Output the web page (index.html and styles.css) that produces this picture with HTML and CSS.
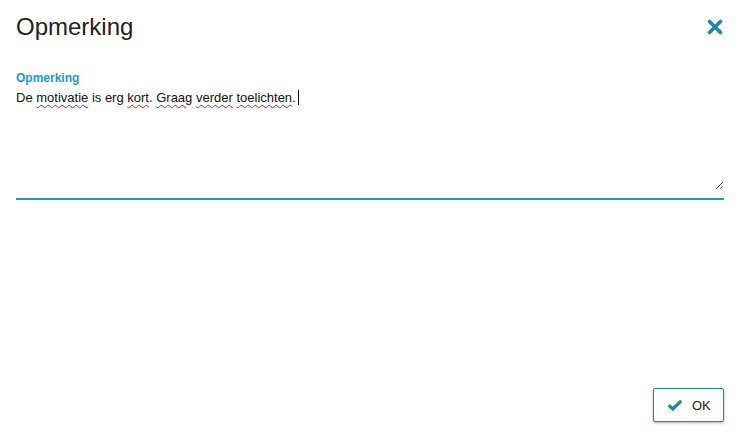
FILE: index.html
```html
<!DOCTYPE html>
<html lang="nl">
<head>
    <meta charset="UTF-8">
    <title>Opmerking</title>
    <link rel="stylesheet" href="styles.css">
</head>
<body>
    <div class="dialog">
        <header class="dialog-header">
            <h1>Opmerking</h1>
            <button class="close" aria-label="Sluiten">
                <svg width="16" height="16" viewBox="0 0 16 16">
                    <path d="M2.5 2.5 L13.5 13.5 M13.5 2.5 L2.5 13.5" stroke="#1a8aa8" stroke-width="3.6" stroke-linecap="round"/>
                </svg>
            </button>
        </header>
        <div class="field">
            <label class="field-label">Opmerking</label>
            <div class="field-box">
                <div class="field-input" role="textbox">De <span class="typo">motivatie</span> is erg <span class="typo">kort</span>. <span class="typo">Graag</span> <span class="typo">verder</span> <span class="typo">toelichten</span>.<span class="caret"></span></div>
            </div>
        </div>
        <div class="spacer"></div>
        <footer class="dialog-footer">
            <button class="btn-ok">
                <svg width="16" height="12" viewBox="0 0 16 12">
                    <path d="M1.8 6.2 L5.8 10 L14.2 1.8" fill="none" stroke="#1a8aa8" stroke-width="3.2" stroke-linejoin="miter"/>
                </svg>
                OK
            </button>
        </footer>
    </div>
</body>
</html>
```

FILE: styles.css
```css
body {
    margin: 0;
    font-family: "Liberation Sans", Arial, sans-serif;
    background-color: white;
    color: #222;
}
.dialog {
    height: 434px;
    display: flex;
    flex-direction: column;
    padding: 0 21px 0 16px;
    box-sizing: border-box;
}
.dialog-header {
    display: flex;
    justify-content: space-between;
    align-items: center;
    height: 54px;
}
.dialog-header h1 {
    margin: 0;
    font-size: 24px;
    font-weight: normal;
    color: #222;
}
.close {
    border: none;
    background: none;
    padding: 0;
    width: 16px;
    height: 16px;
    margin-right: 1px;
}
.field {
    margin-top: 17px;
}
.field-label {
    display: block;
    font-size: 12px;
    font-weight: bold;
    color: #1a9ad6;
    margin-bottom: 5px;
}
.field-box {
    padding-bottom: 8px;
    border-bottom: 2px solid #1a9ad6;
}
.field-input {
    font-size: 13px;
    line-height: 16px;
    color: #111;
    height: 100px;
    resize: vertical;
    overflow: auto;
}
.typo {
    text-decoration: underline wavy #e02020;
    text-decoration-thickness: 1px;
    text-underline-offset: 2px;
}
.caret {
    display: inline-block;
    width: 1px;
    height: 15px;
    background-color: #111;
    vertical-align: -3px;
    margin-left: 2px;
}
.spacer {
    flex: 1;
}
.dialog-footer {
    display: flex;
    justify-content: flex-end;
    padding-bottom: 12px;
}
.btn-ok {
    display: flex;
    align-items: center;
    gap: 9px;
    width: 71px;
    height: 34px;
    padding: 0 0 0 13px;
    background-color: white;
    border: 1px solid #1a8aa8;
    border-radius: 2px;
    box-shadow: 0 1px 3px rgba(0, 0, 0, 0.3);
    font-family: "Liberation Sans", Arial, sans-serif;
    font-size: 13px;
    color: #222;
}
```
